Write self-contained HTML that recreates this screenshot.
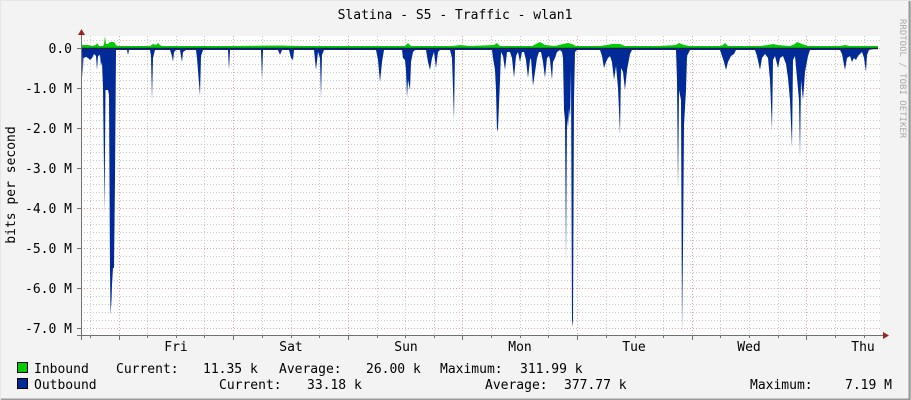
<!DOCTYPE html>
<html><head><meta charset="utf-8"><style>
html,body{margin:0;padding:0;background:#f3f3f3;}
svg{display:block;}
text{font-family:"DejaVu Sans Mono","Liberation Mono",monospace;font-size:13px;fill:#000;}
</style></head><body>
<svg width="911" height="400" viewBox="0 0 911 400" xmlns="http://www.w3.org/2000/svg">
<rect x="0" y="0" width="911" height="400" fill="#f3f3f3"/>
<path d="M0 0.5H910.5V399.5" fill="none" stroke="#c8c8c8" stroke-width="1"/>
<path d="M909.5 0V399.5H0" fill="none" stroke="#9a9a9a" stroke-width="2"/>
<path d="M0.5 400V0.5H911" fill="none" stroke="#e6e6e6" stroke-width="1"/>
<rect x="81" y="36" width="799" height="299" fill="#fff"/>
<g stroke="#c8c8c8" stroke-width="1" stroke-dasharray="1,2">
<path d="M81 56.5H880M81 64.5H880M81 72.5H880M81 80.5H880M81 96.5H880M81 104.5H880M81 112.5H880M81 120.5H880M81 136.5H880M81 144.5H880M81 152.5H880M81 160.5H880M81 176.5H880M81 184.5H880M81 192.5H880M81 200.5H880M81 216.5H880M81 224.5H880M81 232.5H880M81 240.5H880M81 256.5H880M81 264.5H880M81 272.5H880M81 280.5H880M81 296.5H880M81 304.5H880M81 312.5H880M81 320.5H880M81 40.5H880"/>
<path d="M90.5 36V335M147.5 36V335M176.5 36V335M204.5 36V335M262.5 36V335M291.5 36V335M319.5 36V335M377.5 36V335M405.5 36V335M434.5 36V335M491.5 36V335M520.5 36V335M548.5 36V335M606.5 36V335M635.5 36V335M663.5 36V335M720.5 36V335M749.5 36V335M778.5 36V335M835.5 36V335M864.5 36V335"/>
</g>
<g stroke="#e8a0a0" stroke-width="1" stroke-dasharray="1,2">
<path d="M81 48.5H880M81 88.5H880M81 128.5H880M81 168.5H880M81 208.5H880M81 248.5H880M81 288.5H880M81 328.5H880"/>
<path d="M119.5 36V335M233.5 36V335M348.5 36V335M462.5 36V335M577.5 36V335M692.5 36V335M806.5 36V335"/>
</g>
<path fill="#00cc00" d="M82 48L82 45L88 45L92 46L96 45L97 43L99 46L103 46L104 44L105 36L106 44L108 44L110 42L114 42L116 45L118 46L150 46L153 44L156 45L158 43L160 45L162 46L230 46L280 45.5L300 46L378 46L405 46L408 43L411 46L452 46L460 45L470 46L494 45L497 43L500 46L532 46L536 44L540 42L545 45L555 46L563 44L568 43L572 44L576 46L600 46L607 45L612 44L620 44L625 46L660 46L676 45L679 43L684 45L690 46L720 46L723 45L725 43L728 46L760 46L768 45L773 44L778 45L790 46L795 44L797 42L802 44L808 46L840 46L845 45L850 46L878 46L878 48Z"/>
<path fill="#002a97" d="M81 48L82 50L82.5 78L83.5 58L86 57L88 58L90 60L92 58L94 54L96 56L97 70L98 56L100 55L101 66L102 62L103 88L104.5 213L105.5 90L108 90L109 95L110 270L110.5 315L111.5 300L112 285L113 268L114 268L115 180L116 50L127 50L128 55L129 50L150 50L151 56L152 100L153 58L155 50L170 50L172 56L173 62L174 52L176 50L180 50L182 62L183 52L186 50L196 50L197 58L200 96L201 56L203 50L228 50L229 70L230 50L261 50L262 80L263 50L278 50L280 55L282 50L289 50L291 58L293 60L294 50L314 50L316 70L318 52L320 58L321 98L322 55L324 50L376 50L378 60L380 82L382 62L384 50L402 50L403 58L405 60L406 70L407 98L408 80L410 90L411 62L413 52L415 50L426 50L428 62L430 70L432 58L434 52L436 68L438 52L440 50L450 50L452 58L454 120L455 50L492 50L493 58L495 70L496 90L497 132L498 128L500 80L501 52L503 56L505 70L507 52L510 52L512 58L514 78L516 56L518 52L520 62L522 52L524 52L526 60L528 78L530 60L531 58L533 86L535 72L537 58L539 52L541 52L543 62L545 78L547 58L549 56L550 60L552 80L553 62L555 58L557 52L560 50L562 52L563 58L564 110L565 120L566 264L567 118L568 128L569 108L570 118L571 70L572 327L573 320L574 100L575 52L577 50L600 50L602 56L604 68L606 62L608 58L610 56L612 62L614 80L616 66L618 88L619 110L620 135L621 68L623 72L625 90L627 70L630 54L632 50L676 50L677 80L678 190L679 90L681 100L682 334L683 250L684 125L686 90L687 56L690 50L720 50L722 56L724 62L726 70L728 62L731 56L734 54L736 50L755 50L757 56L760 70L762 58L765 54L768 58L770 80L772 130L773 60L775 56L778 68L780 58L783 56L786 64L788 78L790 100L792 148L793 60L795 56L797 78L799 100L800 157L801 80L803 100L805 72L808 56L810 50L840 50L842 54L845 70L847 58L850 56L852 62L854 58L856 60L858 56L860 54L862 52L864 58L866 72L867 55L869 50L878 48Z"/>
<path d="M81 48.5H878" stroke="#1a1a5a" stroke-width="1.5"/>
<g stroke="#707070" stroke-width="1">
<path d="M81.5 30V340"/><path d="M77 335.5H884"/>
<path d="M77 48.5H81M77 88.5H81M77 128.5H81M77 168.5H81M77 208.5H81M77 248.5H81M77 288.5H81M77 328.5H81"/>
<path d="M119.5 335V340M233.5 335V340M348.5 335V340M462.5 335V340M577.5 335V340M692.5 335V340M806.5 335V340M90.5 335V338M147.5 335V338M176.5 335V338M204.5 335V338M262.5 335V338M291.5 335V338M319.5 335V338M377.5 335V338M405.5 335V338M434.5 335V338M491.5 335V338M520.5 335V338M548.5 335V338M606.5 335V338M635.5 335V338M663.5 335V338M720.5 335V338M749.5 335V338M778.5 335V338M835.5 335V338M864.5 335V338"/>
</g>
<path d="M78 35L81.5 29L85 35Z" fill="#992222"/>
<path d="M883 332L889 335.5L883 339Z" fill="#992222"/>
<text x="455" y="19" text-anchor="middle">Slatina - S5 - Traffic - wlan1</text>
<text transform="translate(15,185) rotate(-90)" text-anchor="middle">bits per second</text>
<text transform="translate(900,19) rotate(90)" style="font-size:9px;fill:#aaa">RRDTOOL / TOBI OETIKER</text>
<g text-anchor="end">
<text x="72" y="53">0.0</text>
<text x="72" y="93">-1.0 M</text>
<text x="72" y="133">-2.0 M</text>
<text x="72" y="173">-3.0 M</text>
<text x="72" y="213">-4.0 M</text>
<text x="72" y="253">-5.0 M</text>
<text x="72" y="293">-6.0 M</text>
<text x="72" y="333">-7.0 M</text>
</g>
<g text-anchor="middle">
<text x="176" y="351">Fri</text><text x="291" y="351">Sat</text><text x="406" y="351">Sun</text><text x="520" y="351">Mon</text><text x="634" y="351">Tue</text><text x="749" y="351">Wed</text><text x="863" y="351">Thu</text>
</g>
<rect x="17.5" y="362.5" width="10" height="10" fill="#00cc00" stroke="#000"/>
<rect x="17.5" y="378.5" width="10" height="10" fill="#002a97" stroke="#000"/>
<text x="34" y="373">Inbound</text>
<text x="116" y="373">Current:</text>
<text x="203" y="373">11.35 k</text>
<text x="279" y="373">Average:</text>
<text x="366" y="373">26.00 k</text>
<text x="440" y="373">Maximum:</text>
<text x="520" y="373">311.99 k</text>
<text x="34" y="389">Outbound</text>
<text x="219" y="389">Current:</text>
<text x="307" y="389">33.18 k</text>
<text x="485" y="389">Average:</text>
<text x="564" y="389">377.77 k</text>
<text x="750" y="389">Maximum:</text>
<text x="845" y="389">7.19 M</text>
</svg>
</body></html>
